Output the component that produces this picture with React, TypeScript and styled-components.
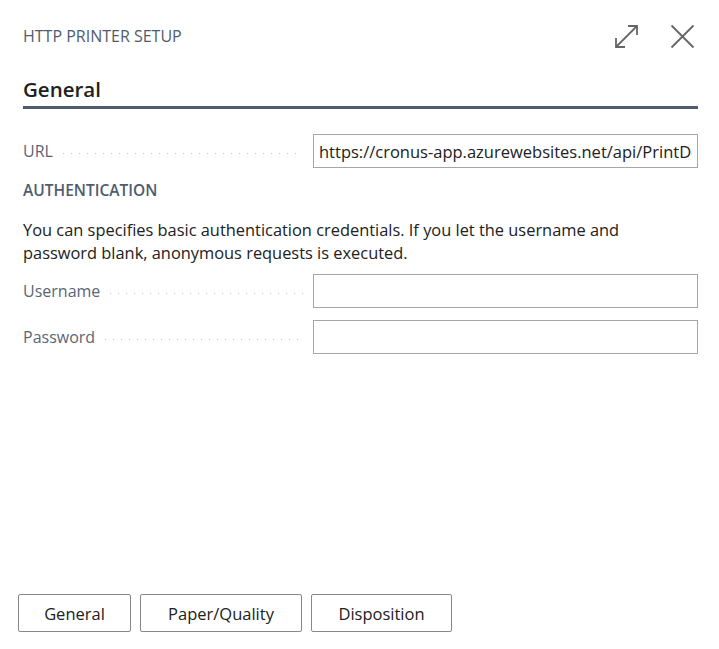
import styled, { createGlobalStyle } from 'styled-components';

const Global = createGlobalStyle`
  html, body {
    margin: 0;
    padding: 0;
    background: #ffffff;
  }
  * { box-sizing: border-box; }
`

const Page = styled.div`
  height: 649px;
  display: flex;
  flex-direction: column;
  font-family: "Open Sans", "Noto Sans", sans-serif;
  color: #212121;
`
const Content = styled.div`
  padding: 0 21px 0 23px;
`
const Header = styled.div`
  height: 72px;
  display: flex;
  align-items: center;
  justify-content: space-between;
`
const Caption = styled.div`
  font-size: 16px;
  color: #505c6d;
`
const Tools = styled.div`
  display: flex;
  align-items: center;
  gap: 31px;
  margin-right: 3px;
`
const IconButton = styled.button`
  border: 0;
  background: none;
  padding: 0;
  width: 25px;
  height: 25px;
  display: flex;
  align-items: center;
  justify-content: center;
  cursor: pointer;
`
const SectionTitle = styled.h2`
  margin: 4px 0 0;
  font-size: 20.5px;
  line-height: 26px;
  font-weight: 600;
  padding-bottom: 4px;
  border-bottom: 3px solid #505c6d;
`
const Form = styled.div`
  margin-top: 25px;
  display: flex;
  flex-direction: column;
`
const Row = styled.div<{ gap?: number }>`
  display: flex;
  align-items: center;
  height: 34px;
  margin-top: ${p => p.gap ?? 0}px;
`
const Label = styled.div`
  width: 290px;
  display: flex;
  align-items: center;
  padding-right: 10px;
  font-size: 16px;
  color: #5a6675;
`
const Leader = styled.span`
  flex: 1;
  height: 1px;
  margin: 4px 0 0 10px;
  background-image: linear-gradient(to right, #c4c4c4 1px, transparent 1px);
  background-size: 8px 1px;
  background-repeat: repeat-x;
`
const Input = styled.input`
  flex: 1;
  min-width: 0;
  height: 34px;
  border: 1px solid #a6a6a6;
  padding: 0 5px;
  font-family: inherit;
  font-size: 16.5px;
  color: #212121;
  outline: none;
`
const GroupTitle = styled.div`
  margin-top: 12px;
  font-size: 15.5px;
  line-height: 20px;
  font-weight: 600;
  color: #505c6d;
`
const Note = styled.p`
  margin: 18px 0 0;
  max-width: 660px;
  font-size: 16.4px;
  line-height: 23px;
  color: #212121;
`
const Footer = styled.div`
  margin-top: auto;
  padding: 0 18px 17px;
  display: flex;
  gap: 9px;
`
const ActionButton = styled.button<{ w: number }>`
  width: ${p => p.w}px;
  height: 38px;
  border: 1px solid #8a8886;
  border-radius: 2px;
  background: #ffffff;
  font-family: "Open Sans", "Noto Sans", sans-serif;
  font-size: 16.5px;
  font-weight: 500;
  color: #212121;
  cursor: pointer;
`

const ExpandIcon = () => (
  <svg width="25" height="25" viewBox="0 0 25 25" fill="none" stroke="#666" strokeWidth="1.8">
    <path d="M2 23 L23 2" />
    <path d="M14 2 H23 V11" />
    <path d="M2 14 V23 H11" />
  </svg>
)

const CloseIcon = () => (
  <svg width="25" height="25" viewBox="0 0 25 25" fill="none" stroke="#666" strokeWidth="1.8">
    <path d="M1.5 1.5 L23.5 23.5 M23.5 1.5 L1.5 23.5" />
  </svg>
)

export default function App() {
  return (
    <Page>
      <Global />
      <Content>
        <Header>
          <Caption>HTTP PRINTER SETUP</Caption>
          <Tools>
            <IconButton aria-label="expand"><ExpandIcon /></IconButton>
            <IconButton aria-label="close"><CloseIcon /></IconButton>
          </Tools>
        </Header>
        <SectionTitle>General</SectionTitle>
        <Form>
          <Row>
            <Label>URL<Leader /></Label>
            <Input defaultValue="https://cronus-app.azurewebsites.net/api/PrintDocument" />
          </Row>
          <GroupTitle>AUTHENTICATION</GroupTitle>
          <Note>
            You can specifies basic authentication credentials. If you let the username and
            password blank, anonymous requests is executed.
          </Note>
          <Row gap={10}>
            <Label>Username<Leader /></Label>
            <Input />
          </Row>
          <Row gap={12}>
            <Label>Password<Leader /></Label>
            <Input type="password" />
          </Row>
        </Form>
      </Content>
      <Footer>
        <ActionButton w={113}>General</ActionButton>
        <ActionButton w={162}>Paper/Quality</ActionButton>
        <ActionButton w={141}>Disposition</ActionButton>
      </Footer>
    </Page>
  );
}
